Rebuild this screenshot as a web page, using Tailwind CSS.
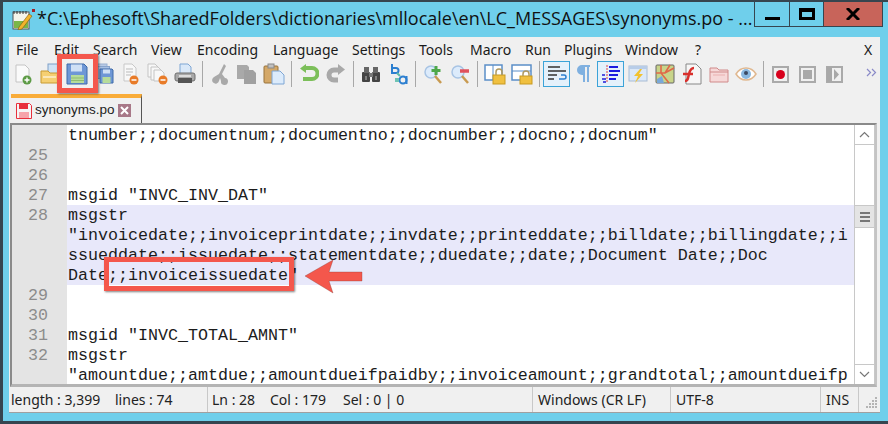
<!DOCTYPE html>
<html lang="en">
<head>
<meta charset="UTF-8">
<title>synonyms.po - Notepad++</title>
<script src="https://cdn.jsdelivr.net/npm/@tailwindcss/browser@4"></script>
</head>
<body class="bg-[#36454f] w-[888px] h-[424px] overflow-hidden relative font-['Open_Sans',sans-serif]">
<!-- window frame -->
<div class="ml-[3px] mt-[2px] w-[885px] h-[419px] bg-[#6fcfeb] flex flex-col">
  <!-- title bar -->
  <div class="h-[35px] flex items-start shrink-0">
    <svg class="ml-[8px] mt-[6px] shrink-0" width="24" height="22" viewBox="0 0 24 22">
      <rect x="2" y="4" width="16" height="17" fill="#f4f4ea" stroke="#555"/>
      <path d="M3 3v3M6 3v3M9 3v3M12 3v3M15 3v3" stroke="#333"/>
      <rect x="3" y="13" width="14" height="7" fill="#7ab648"/>
      <path d="M8 19l10-13 3 2-10 13-4 1z" fill="#f0b32c" stroke="#7a5a10" stroke-width=".6"/>
      <rect x="21" y="1" width="3" height="3" fill="#a0202a"/>
    </svg>
    <div class="ml-[2px] mt-[3px] w-[716px] text-[18px] leading-[26px] text-[#111] whitespace-nowrap overflow-hidden">*C:\Ephesoft\SharedFolders\dictionaries\mllocale\en\LC_MESSAGES\synonyms.po - ...</div>
    <div class="flex h-[25px] ml-auto mr-[5px] border border-t-0 border-[#36454f]">
      <div class="w-[35px] flex items-center justify-center border-r border-[#36454f]"><div class="w-[15px] h-[3px] bg-black mt-[9px]"></div></div>
      <div class="w-[33px] flex items-start justify-center"><div class="w-[16px] h-[12px] border-[3px] border-t-[4px] border-black mt-[6px]"></div></div>
      <div class="w-[59px] bg-[#c8645a] border-l border-[#36454f] flex items-center justify-center">
        <svg width="14" height="12" viewBox="0 0 14 12"><path d="M1 0l12 12M13 0L1 12" stroke="#000" stroke-width="3"/></svg>
      </div>
    </div>
  </div>
  <!-- client area -->
  <div class="ml-[6px] w-[871px] h-[376px] bg-[#f0f0f0] flex flex-col border-b border-[#a0a0a0] shrink-0">
    <!-- menu -->
    <div class="h-[24px] flex items-end text-[14px] leading-[22px] text-[#1a1a1a] pl-[7px] shrink-0 font-['Noto_Sans',sans-serif]">
      <span class="w-[38px]">File</span><span class="w-[39px]">Edit</span><span class="w-[58px]">Search</span><span class="w-[46px]">View</span><span class="w-[76px]">Encoding</span><span class="w-[79px]">Language</span><span class="w-[67px]">Settings</span><span class="w-[51px]">Tools</span><span class="w-[55px]">Macro</span><span class="w-[39px]">Run</span><span class="w-[61px]">Plugins</span><span class="w-[70px]">Window</span><span class="w-[169px]">?</span><span>X</span>
    </div>
    <!-- toolbar -->
    <div class="h-[26px] flex items-center pl-[1px] shrink-0">
      <!-- new -->
      <div class="w-[27px] flex justify-center"><svg width="20" height="22" viewBox="0 0 20 22"><path d="M3 2h9l4 4v13H3z" fill="#fafafa" stroke="#c4c4c4"/><circle cx="14" cy="17" r="4.5" fill="#5d9b46"/><path d="M14 14.5v5M11.5 17h5" stroke="#fff" stroke-width="1.4"/></svg></div>
      <!-- open -->
      <div class="w-[27px] flex justify-center"><svg width="20" height="22" viewBox="0 0 20 22"><rect x="8" y="1" width="10" height="13" fill="#cfe2f5" stroke="#7f9fc8"/><path d="M1 8h7l2 2h8v10H1z" fill="#f5cf72" stroke="#c79a33"/><path d="M3 14h13" stroke="#fff"/></svg></div>
      <!-- save -->
      <div class="w-[27px] flex justify-center"><svg width="22" height="22" viewBox="0 0 22 22"><path d="M1 1h17l3 3v17H1z" fill="#6e97d6" stroke="#3e6aa8"/><rect x="5" y="1.500" width="11" height="7" fill="#cfe0f5"/><rect x="5" y="12" width="13" height="8" fill="#b6dc9a"/><path d="M5 15h13M5 17.500h13" stroke="#8fbc70"/></svg></div>
      <!-- save all -->
      <div class="w-[27px] flex justify-center"><svg width="20" height="22" viewBox="0 0 20 22"><rect x="1" y="1" width="12" height="12" fill="#b8cbe6" stroke="#9ab0d0"/><rect x="3.500" y="3.500" width="12" height="12" fill="#a8c0e2" stroke="#88a4cc"/><path d="M6 6h12l1 1v13H6z" fill="#6e97d6" stroke="#3e6aa8"/><rect x="8.500" y="14" width="8" height="6" fill="#b6dc9a"/><rect x="9" y="6.500" width="7" height="4" fill="#cfe0f5"/></svg></div>
      <!-- close -->
      <div class="w-[27px] flex justify-center"><svg width="20" height="22" viewBox="0 0 20 22"><path d="M3 1h8l4 4v13H3z" fill="#f8f8f8" stroke="#c8c8c8"/><path d="M5 6h7M5 9h7M5 12h5" stroke="#bbb"/><circle cx="13" cy="17" r="4.500" fill="#e87b28"/><path d="M10.500 17h5" stroke="#fff" stroke-width="1.500"/></svg></div>
      <!-- close all -->
      <div class="w-[27px] flex justify-center"><svg width="22" height="22" viewBox="0 0 22 22"><path d="M1 1h7l3 3v10H1z" fill="#f8f8f8" stroke="#c4c4c4"/><path d="M4 4h7l3 3v10H4z" fill="#f8f8f8" stroke="#c4c4c4"/><path d="M7 7h7l3 3v8H7z" fill="#f8f8f8" stroke="#c4c4c4"/><circle cx="16" cy="17" r="4.500" fill="#e87b28"/><path d="M13.500 17h5" stroke="#fff" stroke-width="1.500"/></svg></div>
      <!-- print -->
      <div class="w-[27px] flex justify-center"><svg width="22" height="22" viewBox="0 0 22 22"><path d="M6 1h8l3 3v7H6z" fill="#d9e8f8" stroke="#7fa6d4"/><rect x="1" y="10" width="20" height="8" rx="2" fill="#a8a8a8" stroke="#6e6e6e"/><rect x="4" y="15" width="14" height="5" fill="#555"/><rect x="5" y="12" width="12" height="2" fill="#dcdcdc"/></svg></div>
      <div class="w-[8px] flex justify-center"><div class="w-px h-[26px] bg-[#a8a8a8]"></div></div>
      <!-- cut -->
      <div class="w-[27px] flex justify-center"><svg width="20" height="22" viewBox="0 0 20 22"><path d="M14 1l2 2-4 8 3 4a3.500 3.500 0 1 1-4 3l-1-3-1 3a3.500 3.500 0 1 1-5-4l5-3z" fill="#a9a9a9"/></svg></div>
      <!-- copy -->
      <div class="w-[27px] flex justify-center"><svg width="22" height="22" viewBox="0 0 22 22"><path d="M1 2h10l2 2v12H1z" fill="#a9a9a9"/><path d="M8 7h9l3 3v11H8z" fill="#a0a0a0"/></svg></div>
      <!-- paste -->
      <div class="w-[27px] flex justify-center"><svg width="22" height="22" viewBox="0 0 22 22"><rect x="1" y="3" width="14" height="17" rx="1" fill="#d4a868" stroke="#98733a"/><rect x="5" y="1" width="6" height="4" fill="#c0c0c0" stroke="#888"/><path d="M9 8h8l4 4v9H9z" fill="#dcebfb" stroke="#7fa6d4"/></svg></div>
      <div class="w-[8px] flex justify-center"><div class="w-px h-[26px] bg-[#a8a8a8]"></div></div>
      <!-- undo -->
      <div class="w-[27px] flex justify-center"><svg width="20" height="20" viewBox="0 0 20 20"><path d="M5 4h8a5.500 5.500 0 0 1 0 11H4" fill="none" stroke="#7cbf5a" stroke-width="4"/><path d="M7 0v9L1 4.500z" fill="#7cbf5a"/></svg></div>
      <!-- redo -->
      <div class="w-[27px] flex justify-center"><svg width="20" height="20" viewBox="0 0 20 20"><path d="M15 6H8a5 5 0 0 0 0 10h4" fill="none" stroke="#a9a9a9" stroke-width="5"/><path d="M12 0v11l7-5.500z" fill="#a9a9a9"/></svg></div>
      <div class="w-[8px] flex justify-center"><div class="w-px h-[26px] bg-[#a8a8a8]"></div></div>
      <!-- find -->
      <div class="w-[27px] flex justify-center"><svg width="20" height="20" viewBox="0 0 20 20"><rect x="1" y="8" width="8" height="10" rx="1" fill="#444"/><rect x="11" y="8" width="8" height="10" rx="1" fill="#444"/><rect x="3" y="3" width="5" height="6" fill="#666"/><rect x="12" y="3" width="5" height="6" fill="#666"/><rect x="8" y="9" width="4" height="4" fill="#777"/><path d="M5 12v4M15 12v4" stroke="#bbb"/></svg></div>
      <!-- replace -->
      <div class="w-[27px] flex justify-center"><svg width="20" height="22" viewBox="0 0 20 22"><path d="M4 1v9h4a2.500 2.500 0 0 0 0-5H4" fill="none" stroke="#2c7fd0" stroke-width="2"/><path d="M9 10l3 3" stroke="#5cb8a8" stroke-width="2"/><circle cx="15" cy="17" r="3.500" fill="none" stroke="#2c7fd0" stroke-width="2"/><path d="M18.500 13v8" stroke="#2c7fd0" stroke-width="2"/><rect x="7" y="15" width="4" height="4" fill="#70c4b4"/></svg></div>
      <div class="w-[8px] flex justify-center"><div class="w-px h-[26px] bg-[#a8a8a8]"></div></div>
      <!-- zoom in -->
      <div class="w-[27px] flex justify-center"><svg width="20" height="20" viewBox="0 0 20 20"><circle cx="8" cy="8" r="6" fill="#dcebfb" stroke="#a8c4e4" stroke-width="1.500"/><path d="M12 12l6 7" stroke="#c89a50" stroke-width="2.500"/><path d="M13 2v9M8.500 6.500h9" stroke="#4ea84a" stroke-width="3"/></svg></div>
      <!-- zoom out -->
      <div class="w-[27px] flex justify-center"><svg width="20" height="20" viewBox="0 0 20 20"><circle cx="8" cy="8" r="6" fill="#dcebfb" stroke="#a8c4e4" stroke-width="1.500"/><path d="M12 12l6 7" stroke="#c89a50" stroke-width="2.500"/><path d="M10 7h9" stroke="#e0525c" stroke-width="3.500"/></svg></div>
      <div class="w-[8px] flex justify-center"><div class="w-px h-[26px] bg-[#a8a8a8]"></div></div>
      <!-- sync vertical -->
      <div class="w-[27px] flex justify-center"><svg width="22" height="22" viewBox="0 0 22 22"><rect x="1" y="2" width="17" height="15" fill="#fff" stroke="#5b8ec8" stroke-width="1.500"/><path d="M9 2v15" stroke="#5b8ec8"/><rect x="9" y="12" width="12" height="9" fill="#f0c040" stroke="#c89a20"/><path d="M12 12V9a3 3 0 0 1 6 0v3" fill="none" stroke="#b09a60" stroke-width="1.500"/></svg></div>
      <!-- sync horizontal -->
      <div class="w-[27px] flex justify-center"><svg width="22" height="22" viewBox="0 0 22 22"><rect x="1" y="2" width="19" height="15" fill="#fff" stroke="#5b8ec8" stroke-width="1.500"/><path d="M1 8h19" stroke="#5b8ec8"/><rect x="9" y="13" width="12" height="8" fill="#f0c040" stroke="#c89a20"/><path d="M12 13v-2a3 3 0 0 1 6 0v2" fill="none" stroke="#b09a60" stroke-width="1.500"/></svg></div>
      <div class="w-[8px] flex justify-center"><div class="w-px h-[26px] bg-[#a8a8a8]"></div></div>
      <!-- word wrap -->
      <div class="w-[27px] h-[26px] flex items-center justify-center bg-[#e5f1fb] border border-[#3ba3d8]"><svg width="20" height="18" viewBox="0 0 20 18"><path d="M1 2h12M1 6h18M1 10h9M1 14h6" stroke="#333" stroke-width="1.500"/><path d="M12 14h5a1.500 1.500 0 0 0 0-4h-3" fill="none" stroke="#2c7fd0" stroke-width="1.500"/></svg></div>
      <!-- all chars -->
      <div class="w-[27px] flex justify-center"><svg width="14" height="20" viewBox="0 0 14 20"><path d="M7 2H5a4 4 0 0 0 0 8h2zM7 2v16M11 2v16M5 2h8" fill="#7fb0e0" stroke="#7fb0e0" stroke-width="2"/></svg></div>
      <!-- indent guide -->
      <div class="w-[27px] h-[26px] flex items-center justify-center bg-[#e5f1fb] border border-[#3ba3d8]"><svg width="20" height="20" viewBox="0 0 20 20"><path d="M6 1v18" stroke="#e04040" stroke-dasharray="2 1"/><path d="M8 3h9M8 7h11M8 11h9M8 15h7" stroke="#1c1ce0" stroke-width="2"/><path d="M1 15h4M2 18h3M1 11h3" stroke="#5050e0" stroke-width="2"/></svg></div>
      <!-- doc map / bolt -->
      <div class="w-[27px] flex justify-center"><svg width="20" height="20" viewBox="0 0 20 20"><rect x="1" y="2" width="18" height="15" fill="#dbe8f8" stroke="#a8bcd4"/><path d="M1 2h18v3H1z" fill="#b8cde8"/><path d="M12 5l-6 7h4l-3 7 8-9h-4l3-5z" fill="#f2c230"/></svg></div>
      <!-- function map -->
      <div class="w-[27px] flex justify-center"><svg width="20" height="20" viewBox="0 0 20 20"><rect x="1" y="1" width="18" height="18" rx="1" fill="#c8d48a" stroke="#666"/><path d="M6 1v8l8 10M1 9h9l9-5M10 9l5-8" stroke="#e06848" stroke-width="1.600" fill="none"/><path d="M2 15l5-3 2 7H2z" fill="#7aa8d8"/></svg></div>
      <!-- function list -->
      <div class="w-[27px] flex justify-center"><svg width="20" height="22" viewBox="0 0 20 22"><path d="M4 1h10l5 5v15H4z" fill="#f6f6f6" stroke="#888"/><path d="M3 18c3 0 3-3 4-7s2-6 5-6M1 11h10" fill="none" stroke="#d8302c" stroke-width="2.500"/></svg></div>
      <!-- folder -->
      <div class="w-[27px] flex justify-center"><svg width="20" height="18" viewBox="0 0 20 18"><path d="M1 3h7l2 2h9v12H1z" fill="#f6d8d8" stroke="#d08a8a"/><path d="M1 7h18" stroke="#d08a8a"/><path d="M4 10h12" stroke="#eab0b0"/></svg></div>
      <!-- eye -->
      <div class="w-[27px] flex justify-center"><svg width="22" height="18" viewBox="0 0 22 18"><path d="M1 9c5-8 15-8 20 0-5 8-15 8-20 0z" fill="#fff" stroke="#e0b890" stroke-width="1.500"/><circle cx="11" cy="9" r="5" fill="#8ab8e0"/><circle cx="11" cy="8" r="2" fill="#3c4860"/></svg></div>
      <div class="w-[8px] flex justify-center"><div class="w-px h-[26px] bg-[#a8a8a8]"></div></div>
      <!-- macro -->
      <div class="w-[27px] flex justify-center"><div class="w-[17px] h-[17px] border-[2px] border-[#aaa] flex items-center justify-center"><div class="w-[9px] h-[9px] rounded-full bg-[#d8001c]"></div></div></div>
      <div class="w-[27px] flex justify-center"><div class="w-[17px] h-[17px] border-[2px] border-[#aaa] flex items-center justify-center"><div class="w-[9px] h-[9px] bg-[#a8a8a8]"></div></div></div>
      <div class="w-[27px] flex justify-center"><svg width="17" height="17" viewBox="0 0 17 17"><rect x="1" y="1" width="15" height="15" fill="none" stroke="#aaa" stroke-width="2"/><path d="M1 1h5v15H1zM8 3l5 5.500L8 14z" fill="#a8a8a8"/></svg></div>
      <div class="w-[32px] pl-[18px] flex items-center mb-[4px]"><svg width="11" height="9" viewBox="0 0 11 9"><path d="M1 1l3.500 3.500L1 8M6 1l3.500 3.500L6 8" fill="none" stroke="#8a8ac8" stroke-width="1.200"/></svg></div>
    </div>
    <!-- tabs -->
    <div class="h-[30px] pl-[2px] shrink-0 flex items-end mt-[6px]">
      <div class="w-[131px] h-[29px] border-t-[4px] border-[#f9ac39] border-r border-r-[#555] flex items-center pl-[5px] shrink-0">
        <svg width="16" height="16" viewBox="0 0 16 16"><path d="M0.500 0.500h13l2 2v13h-15z" fill="#f5f5f5" stroke="#e8303c"/><rect x="3" y="1" width="9" height="5" fill="#e8303c"/><rect x="3" y="9" width="10" height="6" fill="#f6a4aa"/></svg>
        <span class="ml-[3px] w-[83px] text-[13.5px] leading-[20px] mb-[1px] text-[#222] font-['Liberation_Sans',sans-serif]">synonyms.po</span>
        <span class="w-[13px] h-[13px] bg-[#a87888] flex items-center justify-center"><svg width="9" height="9" viewBox="0 0 9 9"><path d="M1 1l7 7M8 1L1 8" stroke="#fff" stroke-width="2"/></svg></span>
      </div>
    </div>
    <!-- editor -->
    <div class="h-[264px] ml-[1px] mr-[3px] border-l-[2px] border-t-[2px] border-b-[3px] border-r-[2px] border-l-[#8a8a8a] border-t-[#8a8a8a] border-r-[#c4c4c4] border-b-[#b4b4b4] flex bg-white overflow-hidden shrink-0">
      <div class="w-[844px] h-[259px] overflow-hidden font-['Liberation_Mono',monospace] text-[16.67px] leading-[22px] text-[#1c1c1c] whitespace-nowrap">
        <div class="flex h-[20px]"><span class="w-[55px] shrink-0 bg-[#e4e4e4] text-[#8c8c8c] text-right pr-[19px]"></span><span class="pl-[1px]">tnumber;;documentnum;;documentno;;docnumber;;docno;;docnum"</span></div>
        <div class="flex h-[20px]"><span class="w-[55px] shrink-0 bg-[#e4e4e4] text-[#8c8c8c] text-right pr-[19px]">25</span></div>
        <div class="flex h-[20px]"><span class="w-[55px] shrink-0 bg-[#e4e4e4] text-[#8c8c8c] text-right pr-[19px]">26</span></div>
        <div class="flex h-[20px]"><span class="w-[55px] shrink-0 bg-[#e4e4e4] text-[#8c8c8c] text-right pr-[19px]">27</span><span class="pl-[1px]">msgid "INVC_INV_DAT"</span></div>
        <div class="flex h-[20px]"><span class="w-[55px] shrink-0 bg-[#e4e4e4] text-[#8c8c8c] text-right pr-[19px]">28</span><span class="pl-[1px] flex-1 bg-[#e8e8fa]">msgstr</span></div>
        <div class="flex h-[20px]"><span class="w-[55px] shrink-0 bg-[#e4e4e4] text-[#8c8c8c] text-right pr-[19px]"></span><span class="pl-[1px] flex-1 bg-[#e8e8fa]">"invoicedate;;invoiceprintdate;;invdate;;printeddate;;billdate;;billingdate;;i</span></div>
        <div class="flex h-[20px]"><span class="w-[55px] shrink-0 bg-[#e4e4e4] text-[#8c8c8c] text-right pr-[19px]"></span><span class="pl-[1px] flex-1 bg-[#e8e8fa]">ssueddate;;issuedate;;statementdate;;duedate;;date;;Document Date;;Doc</span></div>
        <div class="flex h-[20px]"><span class="w-[55px] shrink-0 bg-[#e4e4e4] text-[#8c8c8c] text-right pr-[19px]"></span><span class="pl-[1px] flex-1 bg-[#e8e8fa]">Date;;invoiceissuedate"</span></div>
        <div class="flex h-[20px]"><span class="w-[55px] shrink-0 bg-[#e4e4e4] text-[#8c8c8c] text-right pr-[19px]">29</span></div>
        <div class="flex h-[20px]"><span class="w-[55px] shrink-0 bg-[#e4e4e4] text-[#8c8c8c] text-right pr-[19px]">30</span></div>
        <div class="flex h-[20px]"><span class="w-[55px] shrink-0 bg-[#e4e4e4] text-[#8c8c8c] text-right pr-[19px]">31</span><span class="pl-[1px]">msgid "INVC_TOTAL_AMNT"</span></div>
        <div class="flex h-[20px]"><span class="w-[55px] shrink-0 bg-[#e4e4e4] text-[#8c8c8c] text-right pr-[19px]">32</span><span class="pl-[1px]">msgstr</span></div>
        <div class="flex h-[20px]"><span class="w-[55px] shrink-0 bg-[#e4e4e4] text-[#8c8c8c] text-right pr-[19px]"></span><span class="pl-[1px]">"amountdue;;amtdue;;amountdueifpaidby;;invoiceamount;;grandtotal;;amountdueifp</span></div>
      </div>
      <!-- scrollbar -->
      <div class="w-[21px] flex flex-col border-x border-[#c8c8c8] bg-white shrink-0">
        <div class="h-[20px] border-b border-[#c8c8c8] flex items-center justify-center"><svg width="11" height="7" viewBox="0 0 11 7"><path d="M1 6l4.500-4.500L10 6" fill="none" stroke="#777" stroke-width="1.200"/></svg></div>
        <div class="h-[60px]"></div>
        <div class="h-[23px] bg-[#e4e4e4] border-y border-[#c8c8c8] flex flex-col items-center justify-center gap-[2px]"><div class="w-[10px] h-[2px] bg-[#777]"></div><div class="w-[10px] h-[2px] bg-[#777]"></div><div class="w-[10px] h-[2px] bg-[#777]"></div></div>
        <div class="flex-1"></div>
        <div class="h-[20px] border-t border-[#c8c8c8] flex items-center justify-center"><svg width="11" height="7" viewBox="0 0 11 7"><path d="M1 1l4.500 4.500L10 1" fill="none" stroke="#777" stroke-width="1.200"/></svg></div>
      </div>
    </div>
    <!-- status bar -->
    <div class="flex-1 flex items-center text-[14px] leading-[22px] text-[#222] font-['Noto_Sans',sans-serif] whitespace-nowrap">
      <div class="w-[199px] h-full flex items-center pl-[2px] border-r border-[#c8c8c8]"><span class="w-[104px]">length : 3,399</span><span>lines : 74</span></div>
      <div class="w-[325px] h-full flex items-center pl-[4px] border-r border-[#c8c8c8]"><span class="w-[58px]">Ln : 28</span><span class="w-[73px]">Col : 179</span><span>Sel : 0 | 0</span></div>
      <div class="w-[138px] h-full flex items-center pl-[5px] border-r border-[#c8c8c8]">Windows (CR LF)</div>
      <div class="w-[150px] h-full flex items-center pl-[5px] border-r border-[#c8c8c8]">UTF-8</div>
      <div class="w-[38px] h-full flex items-center pl-[5px] border-r border-[#c8c8c8]">INS</div>
      <svg class="ml-auto self-end mb-[2px] mr-[1px]" width="14" height="14" viewBox="0 0 14 14" fill="#b4b4b4"><rect x="10" y="1" width="2" height="2"/><rect x="7" y="4" width="2" height="2"/><rect x="10" y="4" width="2" height="2"/><rect x="4" y="7" width="2" height="2"/><rect x="7" y="7" width="2" height="2"/><rect x="10" y="7" width="2" height="2"/><rect x="1" y="10" width="2" height="2"/><rect x="4" y="10" width="2" height="2"/><rect x="7" y="10" width="2" height="2"/><rect x="10" y="10" width="2" height="2"/></svg>
    </div>
  </div>
</div>
<!-- annotations over the screenshot -->
<div class="absolute left-[57px] top-[54px] w-[41px] h-[39px] border-[5px] border-[#f4574c] shadow-[1px_1px_2px_rgba(0,0,0,0.5)]"></div>
<div class="absolute left-[104px] top-[257px] w-[190px] h-[34px] border-[5px] border-[#f4574c] shadow-[1px_1px_2px_rgba(0,0,0,0.5)]"></div>
<svg class="absolute left-[303px] top-[258px]" width="62" height="38" viewBox="0 0 62 38"><path d="M2 18L30 2l-4 12h33v9H26l4 12z" fill="#f4574c" stroke="#8a3a34" stroke-opacity=".35"/></svg>
</body>
</html>
